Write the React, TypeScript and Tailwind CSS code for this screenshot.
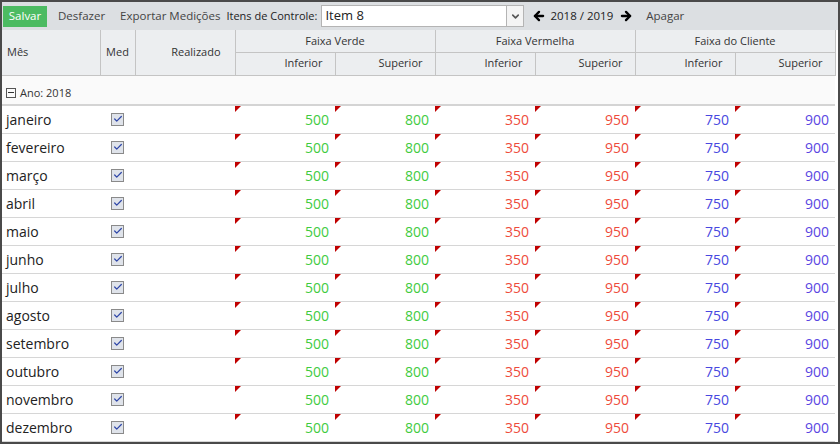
import React from 'react';
import { ArrowLeft, ArrowRight, ChevronDown, Check } from 'lucide-react';

const months = [
  'janeiro', 'fevereiro', 'março', 'abril', 'maio', 'junho',
  'julho', 'agosto', 'setembro', 'outubro', 'novembro', 'dezembro',
];

const values = [
  { v: 500, c: 'text-[#3fcb3f]' },
  { v: 800, c: 'text-[#3fcb3f]' },
  { v: 350, c: 'text-[#ee4b3b]' },
  { v: 950, c: 'text-[#ee4b3b]' },
  { v: 750, c: 'text-[#4848e0]' },
  { v: 900, c: 'text-[#5a46e2]' },
];

function NumCell({ v, c }: { v: number; c: string }) {
  return (
    <td className={`relative h-[28px] border-b border-[#d6d6d6] pr-[6px] text-right text-[14px] ${c}`}>
      <span className="absolute left-0 top-0 w-0 h-0 border-t-[6px] border-r-[6px] border-t-[#c00000] border-r-transparent" />
      {v}
    </td>
  );
}

export default function App() {
  return (
    <div
      className="w-[840px] h-[444px] border-2 border-[#4a4a4a] bg-white overflow-hidden flex flex-col"
      style={{ fontFamily: '"Open Sans", "Noto Sans", sans-serif' }}
    >
      {/* toolbar */}
      <div className="h-[28px] bg-[#dcdfe2] flex items-center pl-[1px] text-[11.5px] text-[#444] shrink-0">
        <button className="w-[44px] h-[21px] bg-[#4cbb62] text-white leading-none">Salvar</button>
        <span className="ml-[11px]">Desfazer</span>
        <span className="ml-[15px]">Exportar Medições</span>
        <span className="ml-[6px] text-[11px] text-[#222]">Itens de Controle:</span>
        <div className="ml-[4px] w-[203px] h-[22px] bg-white border border-[#b4b4b4] flex items-center">
          <span className="flex-1 pl-[3px] text-[13px] text-[#222]">Item 8</span>
          <div className="w-[17px] h-full border-l border-[#b4b4b4] bg-[#f4f4f4] flex items-center justify-center">
            <ChevronDown size={11} strokeWidth={3.5} className="text-[#555]" />
          </div>
        </div>
        <ArrowLeft size={14} strokeWidth={4} className="ml-[8px] text-black" />
        <span className="ml-[4px] text-[#222]">2018 / 2019</span>
        <ArrowRight size={14} strokeWidth={4} className="ml-[6px] text-black" />
        <span className="ml-[13px]">Apagar</span>
      </div>

      <table className="border-collapse table-fixed w-[833px] text-[#333]">
        <colgroup>
          <col className="w-[98px]" />
          <col className="w-[35px]" />
          <col className="w-[100px]" />
          <col className="w-[100px]" />
          <col className="w-[100px]" />
          <col className="w-[100px]" />
          <col className="w-[100px]" />
          <col className="w-[100px]" />
          <col className="w-[100px]" />
        </colgroup>
        <thead className="bg-[#eceef0] text-[11px] font-normal">
          <tr className="h-[22px]">
            <th rowSpan={2} className="font-normal text-left pl-[5px] border-r border-[#c4c4c4] border-b">Mês</th>
            <th rowSpan={2} className="font-normal text-center border-r border-[#c4c4c4] border-b">Med</th>
            <th rowSpan={2} className="font-normal text-right pr-[14px] border-r border-[#c4c4c4] border-b">Realizado</th>
            <th colSpan={2} className="font-normal text-center border-r border-b border-[#c4c4c4]">Faixa Verde</th>
            <th colSpan={2} className="font-normal text-center border-r border-b border-[#c4c4c4]">Faixa Vermelha</th>
            <th colSpan={2} className="font-normal text-center border-r border-b border-[#c4c4c4]">Faixa do Cliente</th>
          </tr>
          <tr className="h-[23px]">
            {['Inferior', 'Superior', 'Inferior', 'Superior', 'Inferior', 'Superior'].map((h, i) => (
              <th key={i} className="font-normal text-right pr-[12px] border-r border-b border-[#c4c4c4]">{h}</th>
            ))}
          </tr>
        </thead>
        <tbody>
          <tr className="h-[30px] bg-[#fafafa]">
            <td colSpan={9} className="border-b-2 border-[#d4d4d4] pl-[4px]">
              <div className="flex items-center gap-[4px] text-[11px] text-[#333] pt-[6px]">
                <span className="w-[10px] h-[10px] border border-[#555] flex items-center justify-center">
                  <span className="w-[6px] h-px bg-[#333]" />
                </span>
                Ano: 2018
              </div>
            </td>
          </tr>
          {months.map((m) => (
            <tr key={m}>
              <td className="h-[28px] border-b border-[#d6d6d6] pl-[4px] text-[14px] text-[#222]">{m}</td>
              <td className="border-b border-[#d6d6d6]">
                <div className="mx-auto w-[13px] h-[13px] border border-[#8a8a8a] bg-[#dfe3ea] flex items-center justify-center">
                  <Check size={10} strokeWidth={3} className="text-[#2f47a8]" />
                </div>
              </td>
              <td className="border-b border-[#d6d6d6]" />
              {values.map((x, i) => (
                <NumCell key={i} v={x.v} c={x.c} />
              ))}
            </tr>
          ))}
        </tbody>
      </table>
    </div>
  );
}
